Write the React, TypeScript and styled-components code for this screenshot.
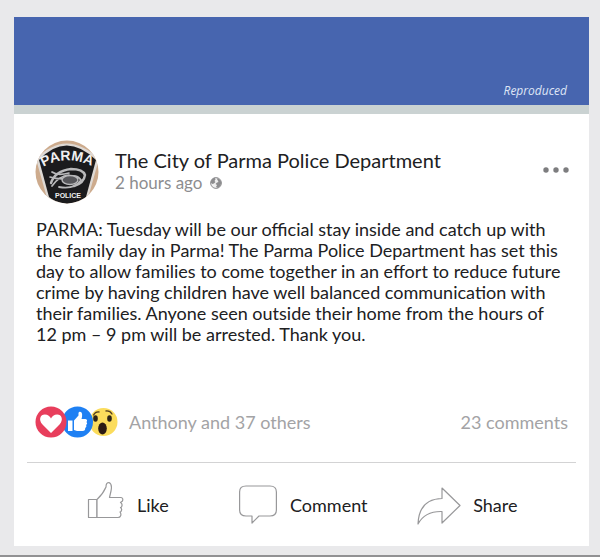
import React from "react";
import styled, { createGlobalStyle } from "styled-components";

const GlobalStyle = createGlobalStyle`
  *, *::before, *::after { box-sizing: border-box; }
  html, body, #root { min-height: 100%; }
  html { height: 100%; }
  body {
    margin: 0;
    background: #e9e9eb;
    font-family: Lato, "Liberation Sans", sans-serif;
    color: #202022;
  }
`;

const Page = styled.main`
  min-height: 100vh;
  padding: 17px 11px 9px 14px;
  border-bottom: 2px solid #919193;
`;

const Card = styled.article`
  background: #ffffff;
  padding-bottom: 16px;
`;

const Banner = styled.header`
  display: flex;
  align-items: flex-end;
  justify-content: flex-end;
  height: 97px;
  padding: 0 22px 6px;
  background: #4765af;
  border-bottom: 9px solid #cad2d2;
  color: #dfe6f6;
  font-family: "Open Sans", "Noto Sans", sans-serif;
  font-size: 12px;
  line-height: 16px;
  font-style: italic;
`;

const PostHeader = styled.div`
  display: flex;
  align-items: center;
  gap: 16px;
  padding: 26px 19px 0 21px;
`;

const Avatar = styled.svg`
  flex: none;
  width: 64px;
  height: 64px;
`;

const Heading = styled.div`
  flex: 1;
  min-width: 0;
  padding-bottom: 2px;
`;

const Author = styled.h1`
  margin: 0;
  font-size: 20px;
  line-height: 24px;
  font-weight: 400;
`;

const Meta = styled.div`
  display: flex;
  align-items: center;
  gap: 8px;
  color: #8d8d8f;
  font-size: 17px;
  line-height: 22px;
`;

const MoreButton = styled.button`
  display: flex;
  padding: 0 0 4px;
  border: 0;
  background: none;
  cursor: pointer;
`;

const Body = styled.p`
  max-width: 555px;
  margin: 0;
  padding: 15px 8px 0 22px;
  font-size: 18px;
  line-height: 21px;
`;

const Stats = styled.div`
  display: flex;
  align-items: center;
  margin: 61px 13px 0;
  padding: 0 8px 24px;
  border-bottom: 1px solid #d3d3d4;
  color: #a3a3a5;
  font-size: 18px;
  line-height: 22px;
`;

const Reactions = styled.svg`
  flex: none;
  width: 84px;
  height: 32px;
  margin-right: 10px;
`;

const CommentCount = styled.span`
  margin-left: auto;
`;

const Actions = styled.div`
  display: grid;
  grid-template-columns: 152fr 178fr 122fr;
  padding: 17px 48px 0 72px;
`;

const Action = styled.button`
  display: flex;
  align-items: center;
  gap: 13px;
  padding: 0;
  border: 0;
  background: none;
  color: #202022;
  font: inherit;
  font-size: 18px;
  line-height: 22px;
  cursor: pointer;
`;

const ActionIcon = styled.svg<{ $width: number }>`
  flex: none;
  width: ${(p) => p.$width}px;
  height: 50px;
  overflow: visible;
  fill: #ffffff;
  stroke: #98989a;
  stroke-width: 1.2;
  stroke-linejoin: round;
`;

function PoliceBadge() {
  return (
    <Avatar viewBox="0 0 64 64" role="img" aria-label="Parma Police badge">
      <defs>
        <clipPath id="badge-clip">
          <circle cx="32" cy="32" r="31.5" />
        </clipPath>
        <path id="badge-arc" d="M5 29Q30 12 60 28" />
      </defs>
      <g clipPath="url(#badge-clip)">
        <rect width="64" height="64" fill="#cdab8d" />
        <path d="M1 19Q31-12 64 19L53 58Q47 63 32 65Q17 63 12 58Z" fill="#ded9d4" />
        <path d="M4 20Q31-9 61 20L51 57Q45 62 32 64Q19 62 14 57Z" fill="#1b1b1d" />
        <g fill="none" stroke="#b9b9bb" strokeLinecap="round">
          <path d="M16 43Q20 31 36 29Q48 29 50 35Q49 43 39 46" strokeWidth="2.4" />
          <path d="M17 32Q22 36 34 33M15 37Q24 40 36 38M17 46Q24 36 34 35" strokeWidth="1.7" />
          <path d="M24 47Q39 50 46 40Q40 32 28 40" strokeWidth="1.8" />
          <ellipse cx="35" cy="40" rx="8" ry="4.5" fill="#56565a" strokeWidth="1.4" />
        </g>
        <text fill="#f0f0f0" fontFamily="Liberation Sans, sans-serif" fontWeight="700" fontSize="14" textAnchor="middle">
          <textPath href="#badge-arc" startOffset="50%">PARMA</textPath>
        </text>
        <text x="33" y="58" fill="#f0f0f0" fontFamily="Liberation Sans, sans-serif" fontWeight="700" fontSize="7" textAnchor="middle">
          POLICE
        </text>
      </g>
    </Avatar>
  );
}

function Globe() {
  return (
    <svg width="12" height="12" viewBox="0 0 12 12" aria-label="Public">
      <circle cx="6" cy="6" r="5.4" fill="#efefef" stroke="#8d8d8f" strokeWidth="1" />
      <path d="M1 4Q2 1 5 .8L5.500 2.500L4.500 4L5.500 5L4 6.500L2.500 7L1 6Z" fill="#8d8d8f" />
      <path d="M6.500 1Q11 2 11.300 6Q11 9.500 8 11L6 10L7 8L5.500 7L7 5.500L8.500 5L7.500 3Z" fill="#8d8d8f" />
    </svg>
  );
}

function ReactionIcons() {
  return (
    <Reactions viewBox="0 0 84 32" role="img" aria-label="Love, like and wow">
      <circle cx="68.500" cy="16" r="14" fill="#fbdc5c" />
      <path d="M58.500 9Q60.500 5.500 64 6M71 5Q75 4.500 77 8" fill="none" stroke="#554020" strokeWidth="1.300" strokeLinecap="round" />
      <ellipse cx="60.500" cy="12.500" rx="2.300" ry="3.200" fill="#2c2318" />
      <ellipse cx="74.500" cy="12.500" rx="2.300" ry="3.200" fill="#2c2318" />
      <ellipse cx="67.500" cy="22.500" rx="4.300" ry="6" fill="#2c1b14" />
      <circle cx="42.500" cy="16" r="15.500" fill="#1f80f3" />
      <path d="M33 14.500H37.500V25H33Z" fill="#fff" />
      <path d="M39 14.500L43.500 9.500V7Q44 5 46 6Q48 7.500 46.500 13H50.500Q53 13.500 51.500 16Q53 17.500 51.200 19Q52 21 50.200 22Q50.500 25 47.500 25H42L39 24Z" fill="#fff" />
      <circle cx="16" cy="16" r="15.500" fill="#e83e5c" />
      <path d="M16 27L7.500 18.500C3 13.500 5.500 8.500 9.800 8.500C13 8.500 15 10.500 16 12.500C17 10.500 19 8.500 22.200 8.500C26.500 8.500 29 13.500 24.500 18.500Z" fill="#fff" />
    </Reactions>
  );
}

export default function App() {
  return (
    <>
      <GlobalStyle />
      <Page>
        <Card>
          <Banner>Reproduced</Banner>
          <PostHeader>
            <PoliceBadge />
            <Heading>
              <Author>The City of Parma Police Department</Author>
              <Meta>
                <span>2 hours ago</span>
                <Globe />
              </Meta>
            </Heading>
            <MoreButton type="button" aria-label="More options">
              <svg width="28" height="8" viewBox="0 0 28 8" fill="#7d7d7f">
                <circle cx="4" cy="4" r="2.700" />
                <circle cx="14" cy="4" r="2.700" />
                <circle cx="24" cy="4" r="2.700" />
              </svg>
            </MoreButton>
          </PostHeader>
          <Body>
            PARMA: Tuesday will be our official stay inside and catch up with the family day in
            Parma! The Parma Police Department has set this day to allow families to come together
            in an effort to reduce future crime by having children have well balanced communication
            with their families. Anyone seen outside their home from the hours of 12 pm – 9 pm will
            be arrested. Thank you.
          </Body>
          <Stats>
            <ReactionIcons />
            <span>Anthony and 37 others</span>
            <CommentCount>23 comments</CommentCount>
          </Stats>
          <Actions>
            <Action type="button">
              <ActionIcon $width={38} viewBox="0 0 38 50" aria-hidden="true">
                <path d="M2.500 19.500H11V37.500H2.500Z" />
                <path d="M11 19.500Q17 14 20 7Q20 2.500 23 2.500Q26.500 4 25 11L23.500 17.500H35Q37.500 18 36.500 21L34.500 22.500Q37 24 35.500 27L34.500 27.500Q36.500 29 35 31.500L34 32Q35.500 34 34.500 36Q34 37.500 32 37.500H11Z" />
              </ActionIcon>
              Like
            </Action>
            <Action type="button">
              <ActionIcon $width={38} viewBox="0 0 38 50" aria-hidden="true">
                <path d="M7 6H31Q37.400 6 37.400 12V30Q37.400 36 31 36H20L13 43V36H7Q.6 36 .6 30V12Q.6 6 7 6Z" />
              </ActionIcon>
              Comment
            </Action>
            <Action type="button">
              <ActionIcon $width={42} viewBox="1 0 42 50" aria-hidden="true">
                <path d="M25 8L43 25.500L25 43V31.500Q8 31 1 44Q2 19 25 18.500Z" />
              </ActionIcon>
              Share
            </Action>
          </Actions>
        </Card>
      </Page>
    </>
  );
}
